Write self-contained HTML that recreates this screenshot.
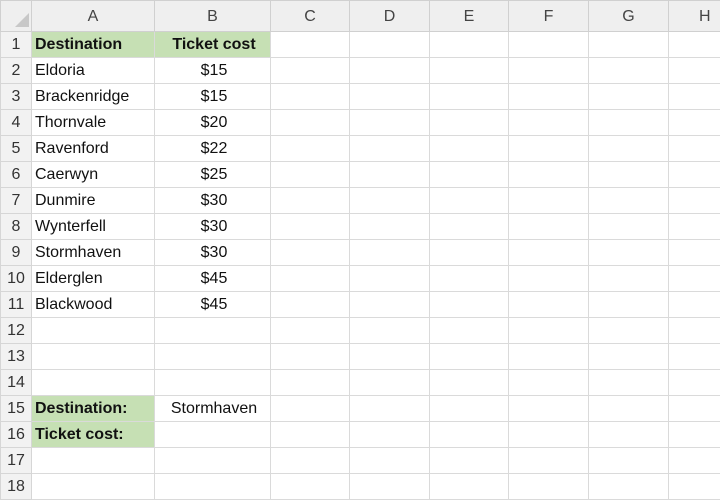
<!DOCTYPE html>
<html><head><meta charset="utf-8"><style>
body{margin:0;width:720px;height:475px;overflow:hidden;background:#fff;font-family:"Liberation Sans",Arial,sans-serif;position:relative;}
table{border-collapse:collapse;table-layout:fixed;position:absolute;left:0;top:0;width:728px;}
td{border:1px solid #dadada;height:25px;padding:0 0 0 3px;font-size:16px;color:#111;white-space:nowrap;overflow:hidden;line-height:25px;}
tr.h td{height:30px;background:#efefef;color:#444;text-align:center;padding:0;border-color:#d0d0d0;font-size:16px;}
td.r{background:#f2f2f2;color:#333;text-align:center;padding:0;border-color:#d6d6d6;}
.g{background:#c6e0b4;font-weight:bold;}
.c{text-align:center;}
</style></head><body>
<table>
<colgroup><col style="width:31px"><col style="width:123px"><col style="width:116px"><col style="width:79px"><col style="width:80px"><col style="width:79px"><col style="width:80px"><col style="width:80px"><col style="width:60px"></colgroup>
<tr class="h"><td><svg width="14" height="14" style="position:relative;left:6px;top:6px"><path d="M14 0V14H0Z" fill="#c8c8c8"/></svg></td><td>A</td><td>B</td><td>C</td><td>D</td><td>E</td><td>F</td><td>G</td><td style="text-align:left;padding-left:30px">H</td></tr>
<tr><td class="r">1</td><td class="g">Destination</td><td class="g c">Ticket cost</td><td></td><td></td><td></td><td></td><td></td><td></td></tr>
<tr><td class="r">2</td><td>Eldoria</td><td class="c">$15</td><td></td><td></td><td></td><td></td><td></td><td></td></tr>
<tr><td class="r">3</td><td>Brackenridge</td><td class="c">$15</td><td></td><td></td><td></td><td></td><td></td><td></td></tr>
<tr><td class="r">4</td><td>Thornvale</td><td class="c">$20</td><td></td><td></td><td></td><td></td><td></td><td></td></tr>
<tr><td class="r">5</td><td>Ravenford</td><td class="c">$22</td><td></td><td></td><td></td><td></td><td></td><td></td></tr>
<tr><td class="r">6</td><td>Caerwyn</td><td class="c">$25</td><td></td><td></td><td></td><td></td><td></td><td></td></tr>
<tr><td class="r">7</td><td>Dunmire</td><td class="c">$30</td><td></td><td></td><td></td><td></td><td></td><td></td></tr>
<tr><td class="r">8</td><td>Wynterfell</td><td class="c">$30</td><td></td><td></td><td></td><td></td><td></td><td></td></tr>
<tr><td class="r">9</td><td>Stormhaven</td><td class="c">$30</td><td></td><td></td><td></td><td></td><td></td><td></td></tr>
<tr><td class="r">10</td><td>Elderglen</td><td class="c">$45</td><td></td><td></td><td></td><td></td><td></td><td></td></tr>
<tr><td class="r">11</td><td>Blackwood</td><td class="c">$45</td><td></td><td></td><td></td><td></td><td></td><td></td></tr>
<tr><td class="r">12</td><td></td><td></td><td></td><td></td><td></td><td></td><td></td><td></td></tr>
<tr><td class="r">13</td><td></td><td></td><td></td><td></td><td></td><td></td><td></td><td></td></tr>
<tr><td class="r">14</td><td></td><td></td><td></td><td></td><td></td><td></td><td></td><td></td></tr>
<tr><td class="r">15</td><td class="g">Destination:</td><td class="c">Stormhaven</td><td></td><td></td><td></td><td></td><td></td><td></td></tr>
<tr><td class="r">16</td><td class="g">Ticket cost:</td><td></td><td></td><td></td><td></td><td></td><td></td><td></td></tr>
<tr><td class="r">17</td><td></td><td></td><td></td><td></td><td></td><td></td><td></td><td></td></tr>
<tr><td class="r">18</td><td></td><td></td><td></td><td></td><td></td><td></td><td></td><td></td></tr>
</table>
</body></html>
